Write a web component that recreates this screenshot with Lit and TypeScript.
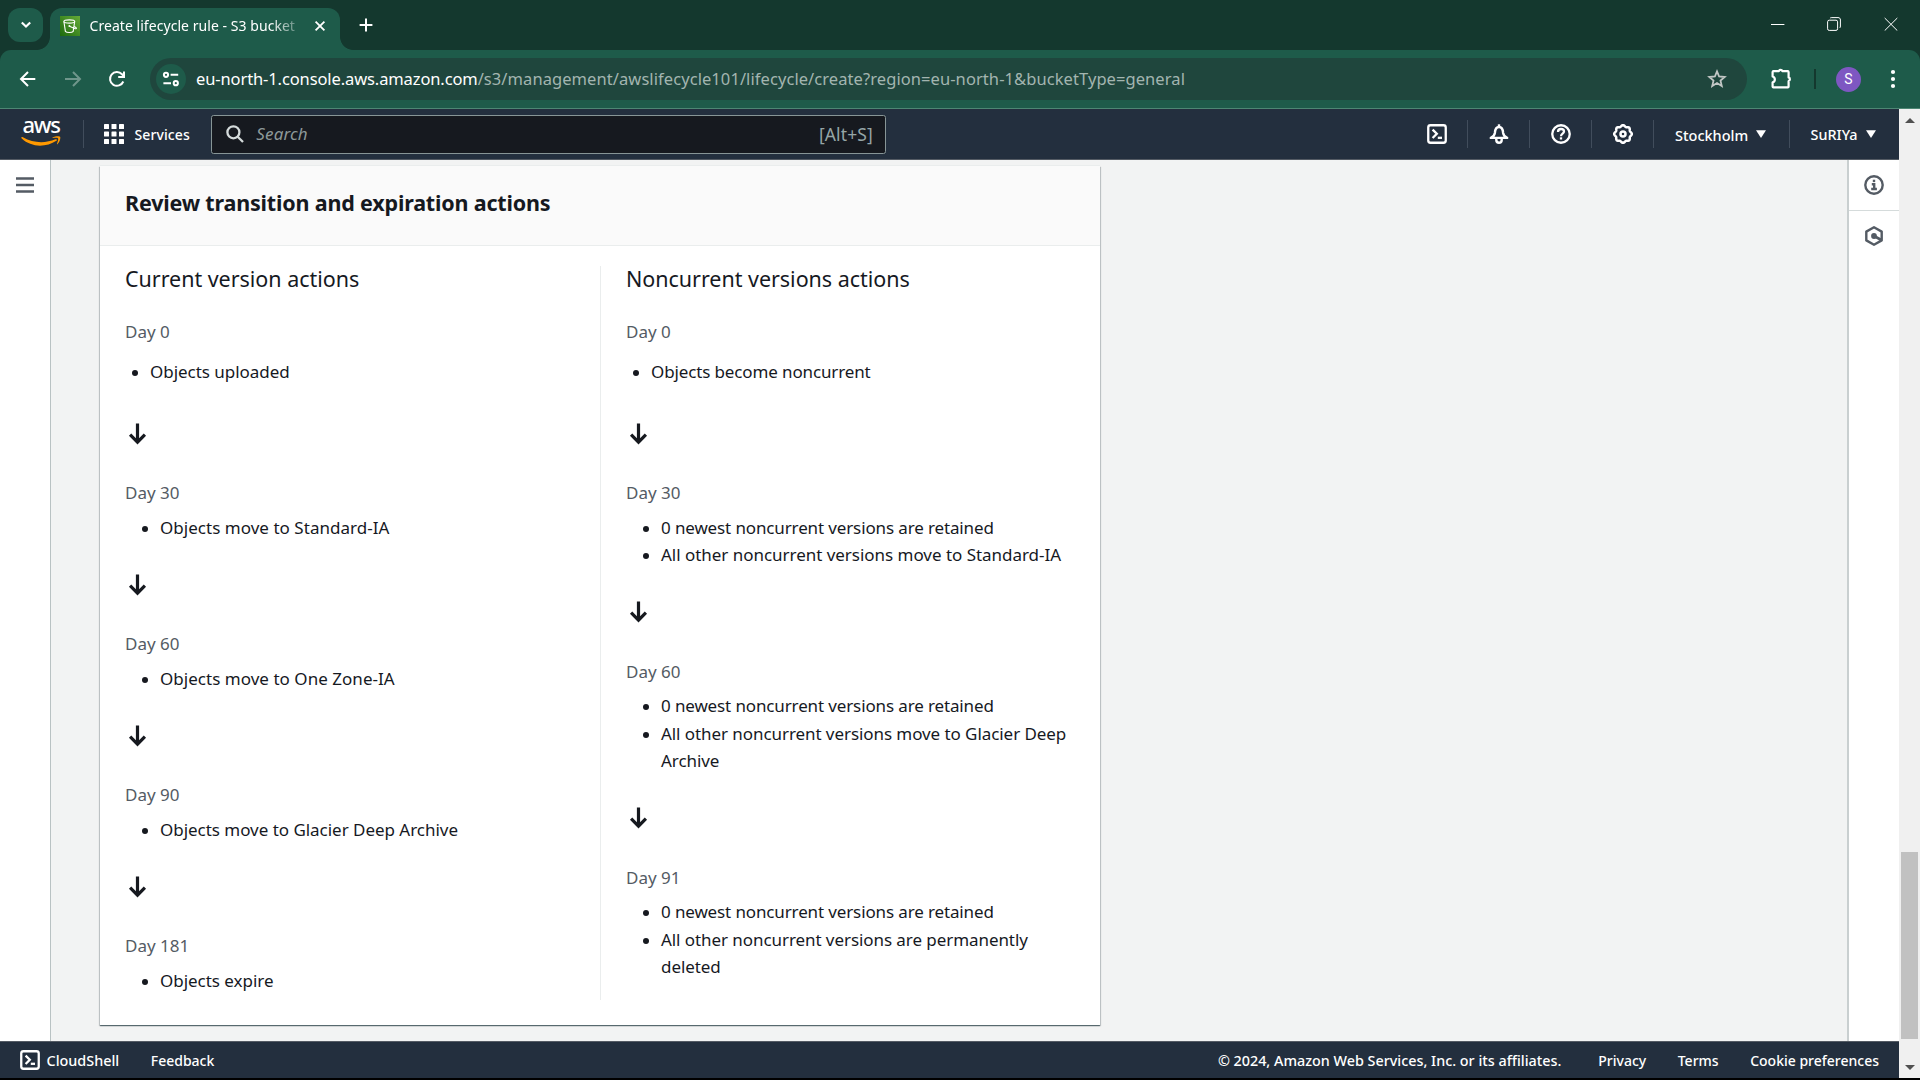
import { LitElement, html, css, svg } from "lit";
import { customElement, property } from "lit/decorators.js";

interface Item {
  text: string;
  fit?: "tight" | "snug" | "wide";
}

interface Step {
  day: string;
  items: Item[];
}

const CURRENT: Step[] = [
  { day: "Day 0", items: [{ text: "Objects uploaded" }] },
  { day: "Day 30", items: [{ text: "Objects move to Standard-IA", fit: "wide" }] },
  { day: "Day 60", items: [{ text: "Objects move to One Zone-IA", fit: "wide" }] },
  { day: "Day 90", items: [{ text: "Objects move to Glacier Deep Archive" }] },
  { day: "Day 181", items: [{ text: "Objects expire" }] },
];

const RETAINED: Item = { text: "0 newest noncurrent versions are retained", fit: "tight" };

const NONCURRENT: Step[] = [
  { day: "Day 0", items: [{ text: "Objects become noncurrent", fit: "tight" }] },
  { day: "Day 30", items: [RETAINED, { text: "All other noncurrent versions move to Standard-IA" }] },
  { day: "Day 60", items: [RETAINED, { text: "All other noncurrent versions move to Glacier Deep Archive", fit: "snug" }] },
  { day: "Day 91", items: [RETAINED, { text: "All other noncurrent versions are permanently deleted", fit: "snug" }] },
];

const shellIcon = svg`
  <rect x="1.25" y="1.25" width="17.5" height="17.5" rx="2.2" fill="none" stroke="currentColor" stroke-width="2.3"/>
  <path d="M5.6 5.6 L9.8 9.8 L5.6 14" fill="none" stroke="currentColor" stroke-width="2.3"/>
  <path d="M10.8 13.8 H15" fill="none" stroke="currentColor" stroke-width="2.3"/>`;

/* Scalloped outline of the settings gear. */
const gearPath = (() => {
  const pts: string[] = [];
  for (let i = 0; i <= 96; i++) {
    const a = (i / 96) * Math.PI * 2;
    const r = 8.15 + 0.7 * Math.cos(a * 8);
    pts.push(`${(10 + r * Math.cos(a)).toFixed(2)} ${(10 + r * Math.sin(a)).toFixed(2)}`);
  }
  return `M${pts.join("L")}Z`;
})();

@customElement("browser-chrome")
class BrowserChrome extends LitElement {
  static styles = css`
    :host {
      display: block;
      height: 109px;
      flex: none;
      background: #14382e;
      color: #fff;
      font-family: "Noto Sans", "Open Sans", sans-serif;
    }
    svg { display: block; flex: none; }
    .strip { display: flex; height: 50px; padding-left: 8px; box-sizing: border-box; }
    .drop {
      width: 35px; height: 34px; margin-top: 8px; border-radius: 12px; background: #1e5b4a;
      display: flex; align-items: center; justify-content: center;
    }
    .tab {
      position: relative; width: 290px; height: 42px; margin: 8px 0 0 7px; box-sizing: border-box;
      padding: 0 12px 6px 10px; border-radius: 12px 12px 0 0; background: #1e5b4a;
      display: flex; align-items: center;
    }
    .tab::before, .tab::after {
      content: ""; position: absolute; bottom: 0; width: 13px; height: 13px;
    }
    .tab::before { left: -13px; background: radial-gradient(circle at 0 0, transparent 12.5px, #1e5b4a 13.2px); }
    .tab::after { right: -13px; background: radial-gradient(circle at 100% 0, transparent 12.5px, #1e5b4a 13.2px); }
    .title {
      width: 212px; margin-left: 9.5px; font-size: 14px; line-height: 20px; white-space: nowrap; letter-spacing: 0.05px;
      -webkit-mask-image: linear-gradient(90deg, #000 85%, rgba(0, 0, 0, 0.25) 98%);
      mask-image: linear-gradient(90deg, #000 85%, rgba(0, 0, 0, 0.25) 98%);
    }
    .close { margin-left: 12.5px; }
    .plus { margin: 18px 0 0 19px; }
    .win { display: flex; gap: 43px; margin: 17px 22px 0 auto; }
    .min { margin-right: -1px; }
    .bar {
      height: 59px; box-sizing: border-box; padding: 0 20px 0 19px; border-bottom: 1px solid #4d8673;
      border-radius: 11px 11px 0 0; background: #1e5b4a; display: flex; align-items: center;
    }
    .fwd { margin-left: 27px; color: #6f968b; }
    .reload { margin-left: 26px; }
    .omni {
      height: 42px; width: 1597px; margin-left: 24px; box-sizing: border-box; padding: 0 20px 0 6px;
      border-radius: 21px; background: #1f463d; display: flex; align-items: center; flex: none;
    }
    .site {
      width: 30px; height: 30px; border-radius: 50%; background: #1e5b4a; margin-right: 10px;
      display: flex; align-items: center; justify-content: center;
    }
    .url { font-size: 16.5px; line-height: 24px; white-space: nowrap; }
    .host { letter-spacing: -0.11px; }
    .path { letter-spacing: 0.075px; color: #a3b5b0; }
    .star { margin-left: auto; }
    .puzzle { margin-left: 22px; }
    .sep { width: 2px; height: 20px; background: #14382e; margin-left: 21px; }
    .avatar {
      width: 25px; height: 25px; border-radius: 50%; background: #7e57c2; margin-left: 20px;
      font: 14px/25px Roboto, sans-serif; text-align: center;
    }
    .dots { margin-left: 29px; }
  `;

  render() {
    return html`
      <div class="strip">
        <div class="drop">
          <svg width="12" height="10" viewBox="0 0 12 10"><path d="M1.8 2.4 L6 6.6 L10.2 2.4" fill="none" stroke="#fff" stroke-width="2.1"/></svg>
        </div>
        <div class="tab">
          <svg width="20" height="20" viewBox="0 0 20 20">
            <defs><linearGradient id="g" x1="0" y1="1" x2="1" y2="0"><stop offset="0" stop-color="#1d6a0d"/><stop offset="1" stop-color="#65ab38"/></linearGradient></defs>
            <rect width="20" height="20" fill="url(#g)"/>
            <g fill="none" stroke="#fff" stroke-width="1.1">
              <ellipse cx="9.3" cy="5.5" rx="5.4" ry="1.6"/>
              <path d="M3.9 5.5 L5.4 15.4 C6.5 16.8 12.1 16.8 13.2 15.4 L14.7 5.5 M9.5 10.2 L14.5 12.4 C17.4 13.4 16.8 11.6 14.2 10.4"/>
            </g>
            <circle cx="9.4" cy="10" r="1" fill="#fff"/>
          </svg>
          <span class="title">Create lifecycle rule - S3 bucket</span>
          <svg class="close" width="12" height="12" viewBox="0 0 12 12"><path d="M1.6 1.6 L10.4 10.4 M10.4 1.6 L1.6 10.4" stroke="#fff" stroke-width="1.8"/></svg>
        </div>
        <svg class="plus" width="14" height="14" viewBox="0 0 14 14"><path d="M7 .6 V13.4 M.6 7 H13.4" stroke="#fff" stroke-width="2"/></svg>
        <div class="win">
          <svg class="min" width="14" height="14" viewBox="0 0 14 14"><path d="M0 7.5 H13.4" stroke="#fff" stroke-width="1"/></svg>
          <svg width="14" height="14" viewBox="0 0 14 14" fill="none" stroke="#fff"><rect x=".6" y="3.2" width="10" height="10.2" rx="1.6"/><path d="M3.2 1 C3.7.6 4.2.6 4.8.6 H11 C12.6.6 13.4 1.4 13.4 3 V9 C13.4 9.8 13.2 10.4 12.8 10.9"/></svg>
          <svg width="14" height="14" viewBox="0 0 14 14"><path d="M.7 1 L13.3 13.6 M13.3 1 L.7 13.6" stroke="#fff" stroke-width="1"/></svg>
        </div>
      </div>
      <div class="bar">
        <svg width="18" height="18" viewBox="0 0 18 18" fill="none" stroke="#fff" stroke-width="2"><path d="M16.3 9 H2.6 M9 2 L2 9 L9 16"/></svg>
        <svg class="fwd" width="18" height="18" viewBox="0 0 18 18" fill="none" stroke="currentColor" stroke-width="2"><path d="M1 9 H15.4 M9 2 L16 9 L9 16"/></svg>
        <svg class="reload" width="18" height="18" viewBox="0 0 18 18" fill="none" stroke="#fff" stroke-width="2"><path d="M15.3 11.5 A6.9 6.9 0 1 1 14 4.2 L16 6.3"/><path d="M16 1.5 V7 H10.2"/></svg>
        <div class="omni">
          <div class="site">
            <svg width="18" height="16" viewBox="0 0 18 16" fill="none" stroke="#fff" stroke-width="2"><circle cx="4" cy="3.8" r="2.1"/><path d="M8.6 3.8 H16.2 M1.4 12.2 H9"/><circle cx="13.8" cy="12.2" r="2.1"/></svg>
          </div>
          <span class="url"><span class="host">eu-north-1.console.aws.amazon.com</span><span class="path">/s3/management/awslifecycle101/lifecycle/create?region=eu-north-1&amp;bucketType=general</span></span>
          <svg class="star" width="20" height="20" viewBox="0 0 20 20"><path d="M10 2.4 L12.1 7.5 L17.7 8 L13.5 11.6 L14.8 17 L10 14.1 L5.2 17 L6.5 11.6 L2.3 8 L7.9 7.5 Z" fill="none" stroke="#c2c6c5" stroke-width="1.8"/></svg>
        </div>
        <svg class="puzzle" width="24" height="24" viewBox="0 0 24 24"><path d="M4.4 4.2 H9.8 A1.9 1.9 0 0 1 13.4 4.2 H18.8 A.9.9 0 0 1 19.6 5 V10.4 A1.9 1.9 0 0 1 19.6 14 V19.6 A.9.9 0 0 1 18.8 20.4 H4.4 A.9.9 0 0 1 3.6 19.6 V15.3 A3 3 0 0 0 3.6 9.5 V5 A.9.9 0 0 1 4.4 4.2 Z" fill="none" stroke="#fff" stroke-width="2.2" stroke-linejoin="round"/></svg>
        <div class="sep"></div>
        <div class="avatar">S</div>
        <svg class="dots" width="6" height="20" viewBox="0 0 6 20" fill="#fff"><circle cx="3" cy="3" r="2.1"/><circle cx="3" cy="10" r="2.1"/><circle cx="3" cy="17" r="2.1"/></svg>
      </div>
    `;
  }
}

@customElement("console-header")
class ConsoleHeader extends LitElement {
  static styles = css`
    :host {
      display: flex; align-items: center; height: 51px; flex: none; box-sizing: border-box;
      border-bottom: 1px solid #545b64; background: #232f3e; color: #fff; padding-left: 21px;
      font: 500 14px/20px "Noto Sans", "Open Sans", sans-serif;
    }
    svg { display: block; flex: none; }
    .logo { width: 40px; height: 29px; display: flex; flex-direction: column; align-items: center; margin-top: 1px; }
    .word { height: 15px; font-size: 22px; line-height: 9px; font-weight: 500; letter-spacing: -1.3px; }
    .smile { margin-top: 1px; }
    .sep { width: 1px; height: 28px; background: #414d5c; flex: none; }
    .logo-sep { margin-left: 22px; }
    .grid { margin-left: 20px; }
    .services { margin-left: 10.5px; letter-spacing: 0.1px; padding-top: 1px; }
    .search {
      width: 675px; height: 39px; margin-left: 21.5px; box-sizing: border-box; padding: 0 12.5px 0 14px;
      border: 1px solid #879596; border-radius: 2.5px; background: #16191f;
      display: flex; align-items: center; font-weight: 400; color: #879596;
    }
    .hint { font-size: 17px; font-style: italic; letter-spacing: 0.13px; margin-left: 12px; color: #8d9899; }
    .keys { font-size: 17.5px; letter-spacing: 0.1px; margin-left: auto; padding-bottom: 1px; color: #95a5a6; }
    .tools { margin-left: auto; display: flex; align-items: center; }
    .cell { width: 61px; display: flex; justify-content: center; }
    .menu { display: flex; align-items: center; white-space: nowrap; padding-top: 1px; }
    .region { width: 135px; padding-left: 21px; box-sizing: border-box; font-size: 14.5px; }
    .user { width: 109px; padding-left: 20.5px; box-sizing: border-box; font-size: 14.4px; }
    .caret { margin: 0 0 2px 8px; }
  `;

  render() {
    const caret = html`<svg class="caret" width="10" height="8" viewBox="0 0 10 8"><path d="M0 .2 H10 L5 8 Z" fill="#fff"/></svg>`;
    return html`
      <div class="logo">
        <span class="word">aws</span>
        <svg class="smile" width="40" height="11" viewBox="0 0 40 11">
          <path d="M.4 1.4 C.7.8 1.2.9 1.9 1.3 C12.5 7.4 24.5 7.4 34.5 3.3 C35.8 2.8 36.5 4 35.4 4.8 C25 11.7 10 11.6 .8 2.6 C.4 2.2.2 1.8.4 1.4 Z" fill="#f90"/>
          <path d="M31.6 1.4 C34 .1 38.3-.2 39.1.7 C39.8 1.7 38.8 6 36.6 8 C36.2 8.4 35.8 8.1 36 7.7 C36.7 6.1 37.7 3 37 2.2 C36.3 1.4 33.6 1.8 32 2 C31.4 2.1 31.2 1.6 31.6 1.4 Z" fill="#f90"/>
        </svg>
      </div>
      <div class="sep logo-sep"></div>
      <svg class="grid" width="20" height="20" viewBox="0 0 20 20" fill="#fff">
        ${[0, 7.5, 15].map((y) => [0, 7.5, 15].map((x) => svg`<rect x=${x} y=${y} width="5" height="5" rx=".6"/>`))}
      </svg>
      <span class="services">Services</span>
      <div class="search">
        <svg width="18" height="18" viewBox="0 0 18 18" fill="none" stroke="#d5dbdb" stroke-width="2.3"><circle cx="7.4" cy="7.3" r="6"/><path d="M11.7 11.7 L17 17"/></svg>
        <span class="hint">Search</span>
        <span class="keys">[Alt+S]</span>
      </div>
      <div class="tools">
        <div class="cell"><svg width="20" height="20" viewBox="0 0 20 20">${shellIcon}</svg></div>
        <div class="sep"></div>
        <div class="cell">
          <svg width="20" height="20" viewBox="0 0 20 20" fill="none" stroke="#fff" stroke-width="2.4">
            <path d="M1.8 13.9 C4 12.9 5.6 11.3 5.9 8.9 C6.1 5 7.6 3 10 3 C12.4 3 13.9 5 14.1 8.9 C14.4 11.3 16 12.9 18.2 13.9 Z" stroke-linejoin="round"/>
            <path d="M10 .3 V3"/><path d="M7.3 14.5 V16 A2.7 2.7 0 0 0 12.7 16 V14.5"/>
          </svg>
        </div>
        <div class="sep"></div>
        <div class="cell">
          <svg width="20" height="20" viewBox="0 0 20 20" fill="none" stroke="#fff" stroke-width="2.3">
            <circle cx="10" cy="10" r="8.75"/>
            <path d="M7 8 C7 6 8.3 5 10 5 C11.7 5 13 6.1 13 7.6 C13 9.7 10 9.7 10 12.2"/><path d="M10 13.3 V15.5"/>
          </svg>
        </div>
        <div class="sep"></div>
        <div class="cell">
          <svg width="20" height="20" viewBox="0 0 20 20" fill="none" stroke="#fff" stroke-width="2.5"><path d=${gearPath}/><circle cx="10" cy="10" r="2.5"/></svg>
        </div>
        <div class="sep"></div>
        <div class="menu region">Stockholm${caret}</div>
        <div class="sep"></div>
        <div class="menu user">SuRIYa${caret}</div>
      </div>
    `;
  }
}

@customElement("action-column")
class ActionColumn extends LitElement {
  @property() heading = "";
  @property({ attribute: false }) steps: Step[] = [];

  static styles = css`
    :host { display: block; }
    .heading { margin: 0 0 27px; font-size: 21.5px; line-height: 25px; font-weight: 400; letter-spacing: -0.03px; }
    .day { line-height: 27.5px; color: #545b64; }
    .list { margin: 7px 0 0; padding: 0 0 0 35px; list-style: none; line-height: 27.5px; }
    .first { margin-top: 12px; padding: 0 0 5px 25px; }
    .item { display: flex; letter-spacing: -0.03px; }
    .item::before {
      content: ""; flex: none; width: 6px; height: 6px; border-radius: 50%; background: #16191f;
      margin: 12px 12px 0 -18px;
    }
    .wide { letter-spacing: 0.03px; }
    .snug { letter-spacing: -0.07px; }
    .tight { letter-spacing: -0.13px; }
    .arrow { display: block; margin: 32.5px 0 34.5px; color: #16191f; }
  `;

  render() {
    return html`
      <h3 class="heading">${this.heading}</h3>
      ${this.steps.map(
        (s, i) => html`
          ${i > 0
            ? html`<svg class="arrow" width="25" height="22" viewBox="0 0 25 22" fill="none" stroke="currentColor" stroke-width="3.2"><path d="M12.5 .4 V18.4 M5.1 11.6 L12.5 19.2 L19.9 11.6"/></svg>`
            : null}
          <div class="day">${s.day}</div>
          <ul class="list ${i === 0 ? "first" : ""}">
            ${s.items.map((t) => html`<li class="item ${t.fit ?? ""}"><span>${t.text}</span></li>`)}
          </ul>
        `
      )}
    `;
  }
}

@customElement("app-root")
class AppRoot extends LitElement {
  static styles = css`
    :host {
      display: flex; flex-direction: column; width: 1920px; height: 1080px; overflow: hidden;
      background: #000; color: #16191f; font: 17px/27.5px "Noto Sans", "Open Sans", sans-serif;
    }
    svg { display: block; flex: none; }
    .view { display: flex; height: 969px; flex: none; }
    .page { width: 1899px; display: flex; flex-direction: column; }
    .mid { flex: 1; display: flex; min-height: 0; }
    .nav { width: 51px; box-sizing: border-box; border-right: 1px solid #b9c2c3; background: #fff; padding: 17px 0 0 16px; }
    .content { flex: 1; background: #f2f3f3; padding: 6px 0 0 49px; }
    .card {
      width: 1000px; height: 859px; background: #fff;
      box-shadow: 0 1px 1px 0 rgba(0, 28, 36, 0.5), 1px 1px 1px 0 rgba(0, 28, 36, 0.15), -1px 1px 1px 0 rgba(0, 28, 36, 0.15), 0 -1px 0 0 #eaeded;
    }
    .card-head {
      height: 80px; box-sizing: border-box; padding: 20.5px 25px 0; border-bottom: 1px solid #eaeded; background: #fafafa;
    }
    .card-title { margin: 0; font-size: 21.5px; line-height: 32px; font-weight: 700; letter-spacing: -0.18px; }
    .cols { display: flex; padding-top: 20px; }
    .col { height: 734px; box-sizing: border-box; width: 501px; padding: 0 25px; }
    .col-a { border-right: 1px solid #eaeded; }
    .col-b { width: 499px; padding-right: 22px; }
    .rail { width: 52px; box-sizing: border-box; border-left: 2px solid #c9cfd0; background: #fff; }
    .tool { height: 50px; box-sizing: border-box; display: flex; align-items: center; justify-content: center; color: #545b64; }
    .tool-a { height: 51px; border-bottom: 1px solid #d5dbdb; }
    .foot {
      height: 37px; flex: none; box-sizing: border-box; border-top: 1px solid #545b64; background: #232f3e; color: #fff;
      display: flex; align-items: center; padding: 0 20px; font-size: 14px; line-height: 20px; font-weight: 500;
    }
    .text { padding-top: 1px; }
    .shell { margin-left: 6.5px; font-size: 14.4px; }
    .feedback { margin-left: 31.5px; }
    .copy { margin-left: auto; font-size: 14.35px; }
    .privacy { margin-left: 37px; }
    .terms { margin-left: 31.5px; }
    .cookie { margin-left: 31.5px; }
    .scroll { width: 21px; background: #f0f0f0; display: flex; flex-direction: column; align-items: center; }
    .up { margin: 9px 0 0; }
    .thumb { width: 17px; height: 187px; margin-top: auto; background: #c1c1c1; }
    .down { margin: 26px 0 8px; }
  `;

  render() {
    return html`
      <browser-chrome></browser-chrome>
      <div class="view">
        <div class="page">
          <console-header></console-header>
          <div class="mid">
            <div class="nav">
              <svg width="18" height="16" viewBox="0 0 18 16" stroke="#545b64" stroke-width="2.5"><path d="M0 1.5 H18 M0 8 H18 M0 14.5 H18"/></svg>
            </div>
            <div class="content">
              <div class="card">
                <div class="card-head"><h2 class="card-title">Review transition and expiration actions</h2></div>
                <div class="cols">
                  <div class="col col-a"><action-column heading="Current version actions" .steps=${CURRENT}></action-column></div>
                  <div class="col col-b"><action-column heading="Noncurrent versions actions" .steps=${NONCURRENT}></action-column></div>
                </div>
              </div>
            </div>
            <div class="rail">
              <div class="tool tool-a">
                <svg width="20" height="20" viewBox="0 0 20 20" fill="none" stroke="currentColor" stroke-width="2.4"><circle cx="10" cy="10" r="8.7"/><path d="M10 4.7 V7.1"/><path d="M7.8 9.2 H10.2 V14 M7.2 14 H12.9"/></svg>
              </div>
              <div class="tool">
                <svg width="20" height="20" viewBox="0 0 20 20"><path d="M10 1.3 L17.7 5.6 V14.4 L10 18.7 L2.3 14.4 V5.6 Z" fill="none" stroke="currentColor" stroke-width="2.4" stroke-linejoin="round"/><circle cx="10" cy="10" r="2.9" fill="currentColor"/><path d="M10 10 L17.4 14" stroke="currentColor" stroke-width="2.6"/></svg>
              </div>
            </div>
          </div>
          <div class="foot">
            <svg width="20" height="20" viewBox="0 0 20 20">${shellIcon}</svg>
            <span class="text shell">CloudShell</span>
            <span class="text feedback">Feedback</span>
            <span class="text copy">© 2024, Amazon Web Services, Inc. or its affiliates.</span>
            <span class="text privacy">Privacy</span>
            <span class="text terms">Terms</span>
            <span class="text cookie">Cookie preferences</span>
          </div>
        </div>
        <div class="scroll">
          <svg class="up" width="10" height="5" viewBox="0 0 10 5"><path d="M0 5 L5 0 L10 5 Z" fill="#505050"/></svg>
          <div class="thumb"></div>
          <svg class="down" width="10" height="5" viewBox="0 0 10 5"><path d="M0 0 L5 5 L10 0 Z" fill="#505050"/></svg>
        </div>
      </div>
    `;
  }
}
